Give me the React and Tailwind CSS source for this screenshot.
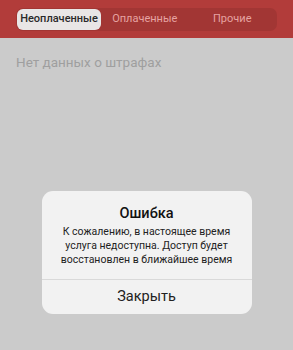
import React from 'react';

const tabs = ['Неоплаченные', 'Оплаченные', 'Прочие'];

export default function App() {
  return (
    <div className="w-[293px] h-[350px] bg-[#cbcbcb] overflow-hidden flex flex-col font-['Roboto',sans-serif]">
      <div className="h-[38px] bg-[#b23c3a] px-4 pt-2">
        <div className="flex h-[23px] rounded-[7px] bg-[#a23634] p-[1px]">
          {tabs.map((t, i) => (
            <div
              key={t}
              className={
                i === 0
                  ? 'w-[84px] flex items-center justify-center rounded-[6px] bg-[#e9e6e6] text-[11px] font-medium text-[#2a2a2a]'
                  : 'flex-1 flex items-center justify-center text-[11px] text-[#e6a3a2]'
              }
            >
              {t}
            </div>
          ))}
        </div>
      </div>

      <p className="px-4 pt-[14px] text-[13.5px] leading-[20px] text-[#9f9f9f]">Нет данных о штрафах</p>

      <div className="flex justify-center pt-[119px]">
        <div className="w-[210px] rounded-[11px] bg-[#f2f2f2] text-center text-[#111]">
          <div className="px-2 pt-[14px] pb-[12px]">
            <h2 className="text-[14.5px] font-medium leading-[18px]">Ошибка</h2>
            <p className="mt-[2px] text-[10.5px] leading-[14px] text-[#222] whitespace-nowrap">
              К сожалению, в настоящее время
              <br />
              услуга недоступна. Доступ будет
              <br />
              восстановлен в ближайшее время
            </p>
          </div>
          <div className="border-t border-[#d9d9d9] h-[35px] flex items-center justify-center text-[14.5px] text-[#222]">
            Закрыть
          </div>
        </div>
      </div>
    </div>
  );
}
